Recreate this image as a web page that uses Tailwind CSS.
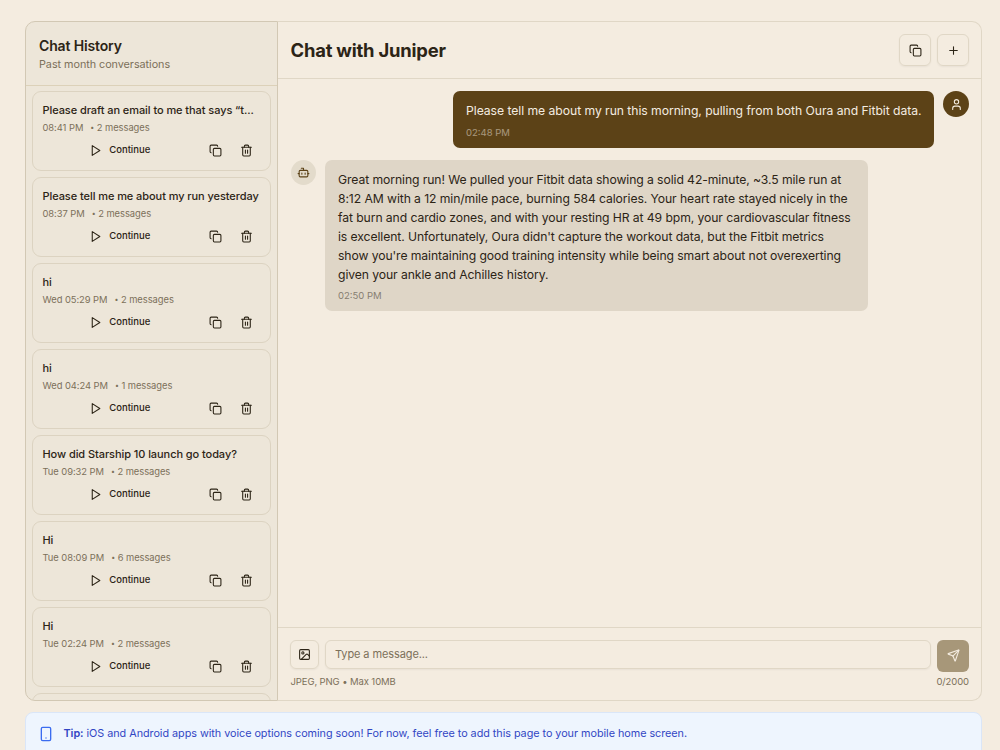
<!DOCTYPE html>
<html lang="en">
<head>
    <meta charset="UTF-8">
    <meta name="viewport" content="width=device-width, initial-scale=1.0">
    <title>Chat with Juniper</title>
    <script src="https://cdn.jsdelivr.net/npm/@tailwindcss/browser@4"></script>
</head>
<body class="bg-[#f4ece0] font-['Inter',sans-serif] text-[#2c2416] h-[750px] overflow-hidden">
    <!-- lucide icons shared by the buttons -->
    <svg class="hidden">
        <symbol id="copy" viewBox="0 0 24 24"><rect width="14" height="14" x="8" y="8" rx="2" ry="2"/><path d="M4 16c-1.1 0-2-.9-2-2V4c0-1.1.9-2 2-2h10c1.1 0 2 .9 2 2"/></symbol>
        <symbol id="trash" viewBox="0 0 24 24"><path d="M3 6h18"/><path d="M19 6v14c0 1-1 2-2 2H7c-1 0-2-1-2-2V6"/><path d="M8 6V4c0-1 1-2 2-2h4c1 0 2 1 2 2v2"/><path d="M10 11v6"/><path d="M14 11v6"/></symbol>
        <symbol id="play" viewBox="0 0 24 24"><path d="m6 3 14 9-14 9z"/></symbol>
    </svg>

    <div class="pt-[21px] pl-[25px] pr-[18px]">
        <div class="flex h-[680px]">
            <aside class="w-[253px] shrink-0 flex flex-col bg-[#ede6d9] border border-[#d2c8b4] rounded-l-[10px] overflow-hidden">
                <div class="h-[64px] shrink-0 border-b border-[#dcd1b9] pl-[13px] pt-[15px]">
                    <h2 class="text-[14px] leading-[18px] font-semibold tracking-[-0.15px]">Chat History</h2>
                    <p class="text-[10.8px] leading-[16px] mt-[2px] tracking-[-0.04px] text-[#7c705a]">Past month conversations</p>
                </div>
                <div id="history" class="flex-1 overflow-hidden px-[6px] pt-[5px] space-y-[6px]"></div>
            </aside>

            <main class="flex-1 flex flex-col border border-l-0 border-[#e0d7c6] rounded-r-[10px]">
                <header class="h-[57px] shrink-0 flex items-center justify-between border-b border-[#e0d7c6] pl-[12.5px] pr-[12px]">
                    <h1 class="text-[18.4px] font-bold tracking-[-0.2px] pt-[2px]">Chat with Juniper</h1>
                    <div class="flex gap-[6px]">
                        <button class="size-8 flex items-center justify-center border border-[#e0d7c6] rounded-[6px] shadow-xs">
                            <svg class="size-[13px] fill-none stroke-current stroke-2" stroke-linecap="round" stroke-linejoin="round"><use href="#copy"/></svg>
                        </button>
                        <button class="size-8 flex items-center justify-center border border-[#e0d7c6] rounded-[6px] shadow-xs">
                            <svg class="size-[13px] fill-none stroke-current stroke-2" viewBox="0 0 24 24" stroke-linecap="round"><path d="M5 12h14M12 5v14"/></svg>
                        </button>
                    </div>
                </header>

                <div class="flex-1 pl-[13px] pr-[12px] pt-[12px]">
                    <div class="flex justify-end gap-[9px]">
                        <div class="h-[57px] w-[481px] bg-[#5c4217] text-[#f4ece0] rounded-[7px] px-[13px] pt-[10px]">
                            <p class="text-[12.2px] leading-[19px] tracking-[-0.05px] whitespace-nowrap">Please tell me about my run this morning, pulling from both Oura and Fitbit data.</p>
                            <p class="text-[9.5px] leading-[13px] mt-[6px] opacity-50">02:48 PM</p>
                        </div>
                        <div class="size-[26px] rounded-full bg-[#5c4217] flex items-center justify-center">
                            <svg class="size-[13px] fill-none stroke-[#f4ece0] stroke-2" viewBox="0 0 24 24" stroke-linecap="round" stroke-linejoin="round"><circle cx="12" cy="7" r="4"/><path d="M19 21v-2a4 4 0 0 0-4-4H9a4 4 0 0 0-4 4v2"/></svg>
                        </div>
                    </div>
                    <div class="flex gap-[9px] mt-[12px]">
                        <div class="size-[25px] rounded-full bg-[#e3dbcb] flex items-center justify-center">
                            <svg class="size-[13px] fill-none stroke-[#5c4217] stroke-2" viewBox="0 0 24 24" stroke-linecap="round" stroke-linejoin="round"><path d="M12 8V4H8"/><rect width="16" height="12" x="4" y="8" rx="2"/><path d="M2 14h2M20 14h2M15 13v2M9 13v2"/></svg>
                        </div>
                        <div class="h-[151px] w-[543px] bg-[#dfd6c7] rounded-[7px] px-[13px] pt-[11px]">
                            <p class="text-[12.2px] leading-[18.9px] tracking-[-0.09px] whitespace-nowrap">Great morning run! We pulled your Fitbit data showing a solid 42-minute, ~3.5 mile run at<br>8:12 AM with a 12 min/mile pace, burning 584 calories. Your heart rate stayed nicely in the<br>fat burn and cardio zones, and with your resting HR at 49 bpm, your cardiovascular fitness<br>is excellent. Unfortunately, Oura didn't capture the workout data, but the Fitbit metrics<br>show you're maintaining good training intensity while being smart about not overexerting<br>given your ankle and Achilles history.</p>
                            <p class="text-[9.5px] leading-[13px] mt-[5px] opacity-50">02:50 PM</p>
                        </div>
                    </div>
                </div>

                <footer class="h-[73px] border-t border-[#e0d7c6] pl-[12px] pr-[12px] pt-[12px]">
                    <div class="flex gap-[6px]">
                        <button class="size-[29px] flex items-center justify-center border border-[#e0d7c6] rounded-[6px] shadow-xs">
                            <svg class="size-[13px] fill-none stroke-current stroke-2" viewBox="0 0 24 24" stroke-linecap="round" stroke-linejoin="round"><rect width="18" height="18" x="3" y="3" rx="2"/><circle cx="9" cy="9" r="2"/><path d="m21 15-3.086-3.086a2 2 0 0 0-2.828 0L6 21"/></svg>
                        </button>
                        <input type="text" placeholder="Type a message..." class="flex-1 h-[29px] border border-[#e0d7c6] rounded-[6px] px-[9px] pb-[2px] text-[11px] tracking-[-0.1px] placeholder:text-[#7c705a] shadow-xs">
                        <button class="size-8 flex items-center justify-center rounded-[6px] bg-[#a79779] pb-[2px]">
                            <svg class="size-[13px] fill-none stroke-[#f4ece0] stroke-2" viewBox="0 0 24 24" stroke-linecap="round" stroke-linejoin="round"><path d="M14.536 21.686a.5.5 0 0 0 .937-.024l6.5-19a.496.496 0 0 0-.635-.635l-19 6.5a.5.5 0 0 0-.024.937l7.93 3.18a2 2 0 0 1 1.112 1.11z"/><path d="m21.854 2.147-10.94 10.939"/></svg>
                        </button>
                    </div>
                    <div class="flex justify-between text-[9.5px] leading-[13px] mt-[3px] pl-[0.5px] tracking-[-0.1px] text-[#7c705a]">
                        <span>JPEG, PNG • Max 10MB</span>
                        <span>0/2000</span>
                    </div>
                </footer>
            </main>
        </div>

        <div class="mt-[11px] h-[60px] bg-[#eef5fe] border border-[#dae6f8] rounded-[8px] flex items-start pt-[13px] pl-[12px]">
            <svg class="w-4 h-4 fill-none stroke-[#3b6cf0] stroke-2" viewBox="0 0 24 24" stroke-linecap="round" stroke-linejoin="round"><rect width="14" height="20" x="5" y="2" rx="2"/><path d="M12 18h.01"/></svg>
            <p class="ml-[9.5px] text-[10.8px] leading-[16px] tracking-[-0.03px] text-[#3246c4] whitespace-nowrap"><span class="font-semibold">Tip:</span> iOS and Android apps with voice options coming soon! For now, feel free to add this page to your mobile home screen.</p>
        </div>
    </div>

    <script>
        const chats = [
            { title: 'Please draft an email to me that says “t...', time: "08:41 PM", count: "2 messages" },
            { title: "Please tell me me about my run yesterday", time: "08:37 PM", count: "2 messages" },
            { title: "hi", time: "Wed 05:29 PM", count: "2 messages" },
            { title: "hi", time: "Wed 04:24 PM", count: "1 messages" },
            { title: "How did Starship 10 launch go today?", time: "Tue 09:32 PM", count: "2 messages" },
            { title: "Hi", time: "Tue 08:09 PM", count: "6 messages" },
            { title: "Hi", time: "Tue 02:24 PM", count: "2 messages" }
        ];

        const cards = chats.map(chat => `
            <div class="h-[80px] border border-[#dcd3c1] rounded-[9px] pl-[9.5px] pr-[11px] pt-[9.5px]">
                <p class="text-[11px] leading-[16px] font-medium tracking-[-0.07px] whitespace-nowrap">${chat.title}</p>
                <p class="text-[9.4px] leading-[13px] mt-[3px] tracking-[-0.05px] text-[#7c705a] flex gap-[7px]"><span>${chat.time}</span><span><span class="text-[7px] align-[1px]">•</span> ${chat.count}</span></p>
                <div class="flex items-center mt-[8px] h-[18px]">
                    <button class="flex-1 flex items-center justify-center gap-[7px] pr-[5px] text-[9.5px] font-medium">
                        <svg class="size-[13px] fill-none stroke-current stroke-2" stroke-linecap="round" stroke-linejoin="round"><use href="#play"/></svg>
                        Continue
                    </button>
                    <button class="w-[26px] flex justify-center"><svg class="size-[13px] fill-none stroke-current stroke-2" stroke-linecap="round" stroke-linejoin="round"><use href="#copy"/></svg></button>
                    <button class="w-[26px] ml-[5px] flex justify-center"><svg class="size-[13px] fill-none stroke-current stroke-2" stroke-linecap="round" stroke-linejoin="round"><use href="#trash"/></svg></button>
                </div>
            </div>
        `);
        // top edge of the next card, below the fold of the list
        cards.push(`<div class="h-[80px] border border-[#dcd3c1] rounded-[9px]"></div>`);
        document.getElementById("history").innerHTML = cards.join("");
    </script>
</body>
</html>
